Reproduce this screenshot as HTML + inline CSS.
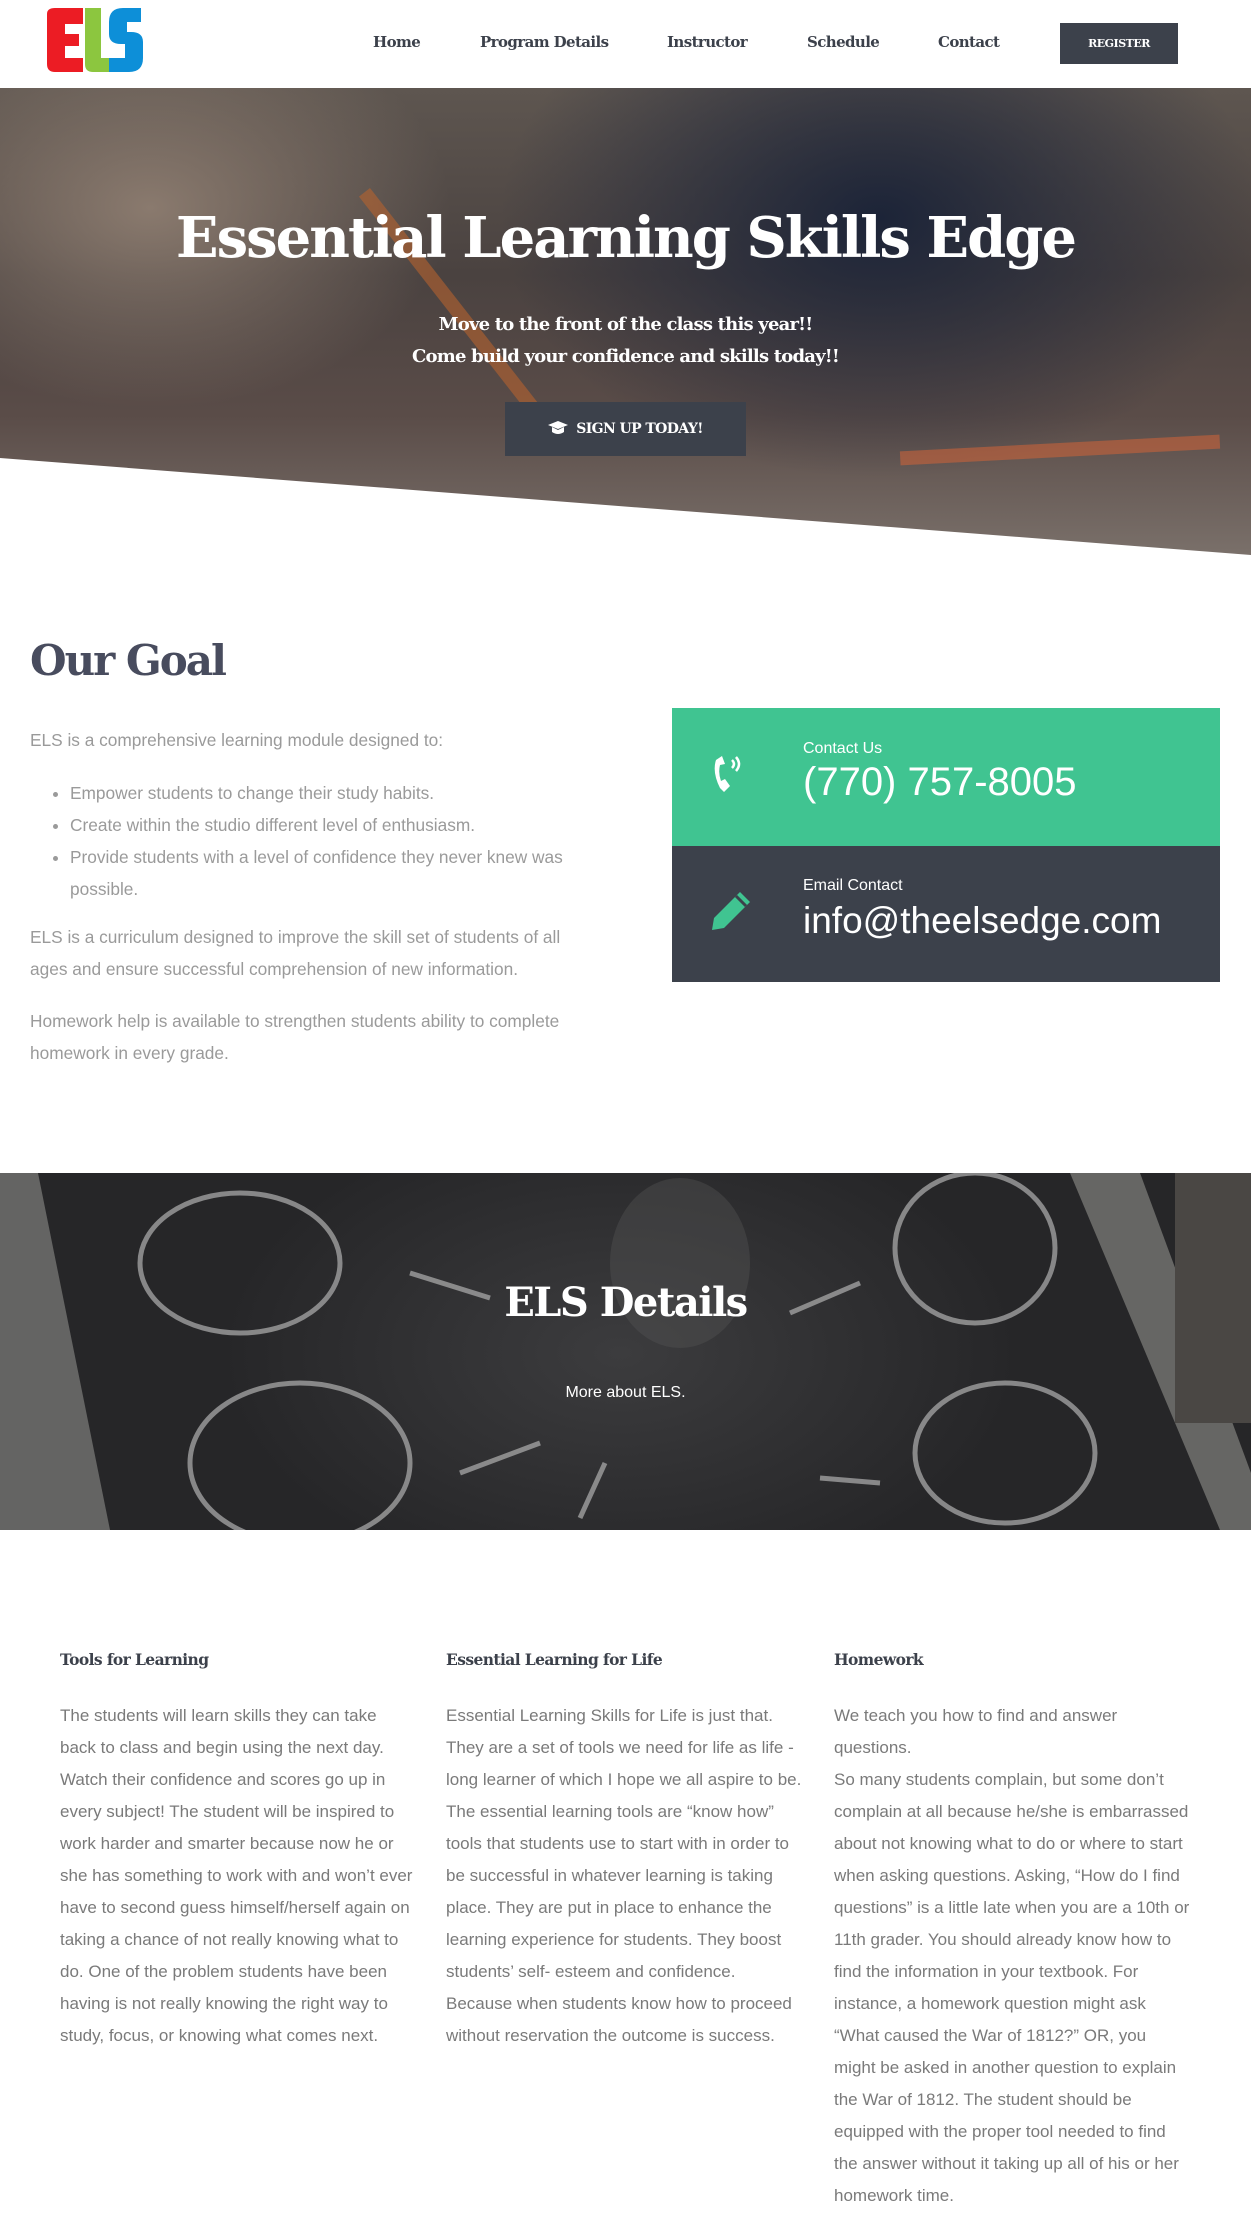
<!DOCTYPE html>
<html><head><meta charset="utf-8"><style>
*{margin:0;padding:0;box-sizing:border-box}
body{width:1251px;height:2228px;position:relative;background:#fff;font-family:"Liberation Sans",sans-serif;overflow:hidden}
.a{position:absolute}
.slab{font-family:"DejaVu Serif","Liberation Serif",serif;font-weight:bold}
.nav{top:33px;font-family:"DejaVu Serif",serif;font-weight:bold;font-size:15px;color:#3c414b;letter-spacing:-0.6px}
.goal p,.goal li{color:#9a9a9a;font-size:17.3px}
.col{width:356px;color:#7a7a7a;font-size:17px;line-height:32px}
.col h4{font-family:"DejaVu Serif",serif;font-weight:bold;font-size:15.5px;color:#3c414b;letter-spacing:-0.6px;margin-bottom:30px;line-height:20px}
</style></head><body>
<!-- header -->
<div class="a" style="left:43px;top:4px;width:102px;height:70px">
<svg width="102" height="70" viewBox="0 0 102 70">
<path d="M4 10 Q4 4 12 4 L40 4 L40 20 L22 20 L22 30 L36 30 L36 42 L22 42 L22 54 L40 54 L40 68 L12 68 Q4 68 4 60Z" fill="#ec1c24"/>
<path d="M42 4 L58 4 L58 54 L66 54 L66 68 L50 68 Q42 68 42 60Z" fill="#8cc63f"/>
<path d="M98 4 L80 4 Q66 4 66 18 L66 30 Q66 40 78 40 L82 40 L82 54 L66 54 L66 68 L86 68 Q100 68 100 54 L100 38 Q100 28 88 28 L84 28 L84 18 L98 18Z" fill="#0d8fd8"/>
</svg></div>
<div class="a nav" style="left:373px">Home</div>
<div class="a nav" style="left:480px">Program Details</div>
<div class="a nav" style="left:667px">Instructor</div>
<div class="a nav" style="left:807px">Schedule</div>
<div class="a nav" style="left:938px">Contact</div>
<div class="a" style="left:1060px;top:23px;width:118px;height:41px;background:#3c414b;color:#fff;font-family:'DejaVu Serif',serif;font-weight:bold;font-size:11px;text-align:center;line-height:41px;letter-spacing:-0.5px">REGISTER</div>
<!-- hero -->
<div class="a" style="left:0;top:88px;width:1251px;height:467px;clip-path:polygon(0 0,100% 0,100% 100%,0 370px);background:
radial-gradient(ellipse 380px 260px at 880px 130px,#1c2438 0%,rgba(28,36,56,0) 100%),
radial-gradient(ellipse 300px 200px at 150px 120px,#8a7a6e 0%,rgba(138,122,110,0) 100%),
linear-gradient(180deg,#5e5650 0%,#4a4240 40%,#5a4c48 70%,#7a706a 100%)">
<div class="a" style="left:370px;top:100px;width:300px;height:14px;background:#b5632f;transform:rotate(52deg);transform-origin:0 0;opacity:.6"></div>
<div class="a" style="left:900px;top:355px;width:320px;height:14px;background:#c8623a;opacity:.6;transform:rotate(-3deg)"></div>
</div>
<div class="a slab" style="left:0;top:202px;width:1251px;text-align:center;color:#fff;font-size:56px;letter-spacing:-2px;line-height:72px">Essential Learning Skills Edge</div>
<div class="a slab" style="left:0;top:309px;width:1251px;text-align:center;color:#fff;font-size:18px;letter-spacing:-0.8px;line-height:32px">Move to the front of the class this year!!<br>Come build your confidence and skills today!!</div>
<div class="a" style="left:505px;top:402px;width:241px;height:54px;background:#3c414b;color:#fff;text-align:center;line-height:54px;font-family:'DejaVu Serif',serif;font-weight:bold;font-size:14px;letter-spacing:-0.6px"><svg width="20" height="14" viewBox="0 0 20 14" style="vertical-align:-2px;margin-right:8px"><path d="M10 0 L20 4 L10 8 L0 4Z M4 6 L4 11 Q10 15 16 11 L16 6 L10 9Z" fill="#fff"/></svg>SIGN UP TODAY!</div>
<!-- goal -->
<div class="a slab" style="left:30px;top:636px;font-size:42px;color:#484c5e;letter-spacing:-2px">Our Goal</div>
<div class="a goal" style="left:30px;top:724px;width:545px;line-height:32px">
<p>ELS is a comprehensive learning module designed to:</p>
<ul style="margin:21px 0 16px 40px;list-style:disc;color:#9a9a9a">
<li>Empower students to change their study habits.</li>
<li>Create within the studio different level of enthusiasm.</li>
<li>Provide students with a level of confidence they never knew was possible.</li></ul>
<p>ELS is a curriculum designed to improve the skill set of students of all ages and ensure successful comprehension of new information.</p>
<p style="margin-top:20px">Homework help is available to strengthen students ability to complete homework in every grade.</p>
</div>
<div class="a" style="left:672px;top:708px;width:548px;height:138px;background:#40c491">
<svg class="a" style="left:40px;top:44px" width="34" height="44" viewBox="0 0 34 44"><path d="M10 4 L4 8 Q0 20 8 36 L12 40 L18 34 L13 27 L9 29 Q6 21 8 13 L13 12 Z" fill="#fff"/><path d="M20 8 Q24 12 20 16 M24 5 Q30 12 24 19" stroke="#fff" stroke-width="2.5" fill="none"/></svg>
<div class="a" style="left:131px;top:32px;color:#fff;font-size:16px">Contact Us</div>
<div class="a" style="left:131px;top:52px;color:#fff;font-size:40px">(770) 757-8005</div>
</div>
<div class="a" style="left:672px;top:846px;width:548px;height:136px;background:#3c414b">
<svg class="a" style="left:38px;top:42px" width="44" height="44" viewBox="0 0 44 44"><path d="M30 4 L40 14 L14 40 L2 42 L4 30 Z" fill="#40c491"/><path d="M26 8 L36 18" stroke="#3c414b" stroke-width="3"/></svg>
<div class="a" style="left:131px;top:31px;color:#fff;font-size:16px">Email Contact</div>
<div class="a" style="left:131px;top:54px;color:#fff;font-size:37px">info@theelsedge.com</div>
</div>
<!-- details banner -->
<div class="a" style="left:0;top:1173px;width:1251px;height:357px;background:radial-gradient(ellipse 500px 300px at 620px 180px,#3c3c3e,#262628 80%)">
<svg width="1251" height="357" style="position:absolute;left:0;top:0">
<polygon points="0,0 38,0 110,357 0,357" fill="#8e8e8a" opacity=".6"/>
<polygon points="1070,0 1140,0 1251,300 1251,357 1220,357" fill="#9a9a96" opacity=".55"/>
<rect x="1175" y="0" width="76" height="250" fill="#4a4744"/>
<g fill="none" stroke="#a8a8a8" stroke-width="5" opacity=".75">
<ellipse cx="240" cy="90" rx="100" ry="70"/>
<ellipse cx="300" cy="290" rx="110" ry="80"/>
<ellipse cx="975" cy="75" rx="80" ry="75"/>
<ellipse cx="1005" cy="280" rx="90" ry="70"/>
<path d="M410 100 L490 125 M790 140 L860 110 M460 300 L540 270 M820 305 L880 310 M580 345 L605 290"/></g>
<ellipse cx="680" cy="90" rx="70" ry="85" fill="#555" opacity=".4"/>
</svg>
<div class="a slab" style="left:0;top:106px;width:1251px;text-align:center;color:#fff;font-size:40px;letter-spacing:-1.5px">ELS Details</div>
<div class="a" style="left:0;top:211px;width:1251px;text-align:center;color:#fff;font-size:16px">More about ELS.</div>
</div>
<!-- columns -->
<div class="a col" style="left:60px;top:1650px"><h4>Tools for Learning</h4>The students will learn skills they can take back to class and begin using the next day. Watch their confidence and scores go up in every subject! The student will be inspired to work harder and smarter because now he or she has something to work with and won’t ever have to second guess himself/herself again on taking a chance of not really knowing what to do. One of the problem students have been having is not really knowing the right way to study, focus, or knowing what comes next.</div>
<div class="a col" style="left:446px;top:1650px"><h4>Essential Learning for Life</h4>Essential Learning Skills for Life is just that. They are a set of tools we need for life as life -long learner of which I hope we all aspire to be. The essential learning tools are “know how” tools that students use to start with in order to be successful in whatever learning is taking place. They are put in place to enhance the learning experience for students. They boost students’ self- esteem and confidence. Because when students know how to proceed without reservation the outcome is success.</div>
<div class="a col" style="left:834px;top:1650px"><h4>Homework</h4>We teach you how to find and answer questions.<br>So many students complain, but some don’t complain at all because he/she is embarrassed about not knowing what to do or where to start when asking questions. Asking, “How do I find questions” is a little late when you are a 10th or 11th grader. You should already know how to find the information in your textbook. For instance, a homework question might ask “What caused the War of 1812?” OR, you might be asked in another question to explain the War of 1812. The student should be equipped with the proper tool needed to find the answer without it taking up all of his or her homework time.</div>
</body></html>
